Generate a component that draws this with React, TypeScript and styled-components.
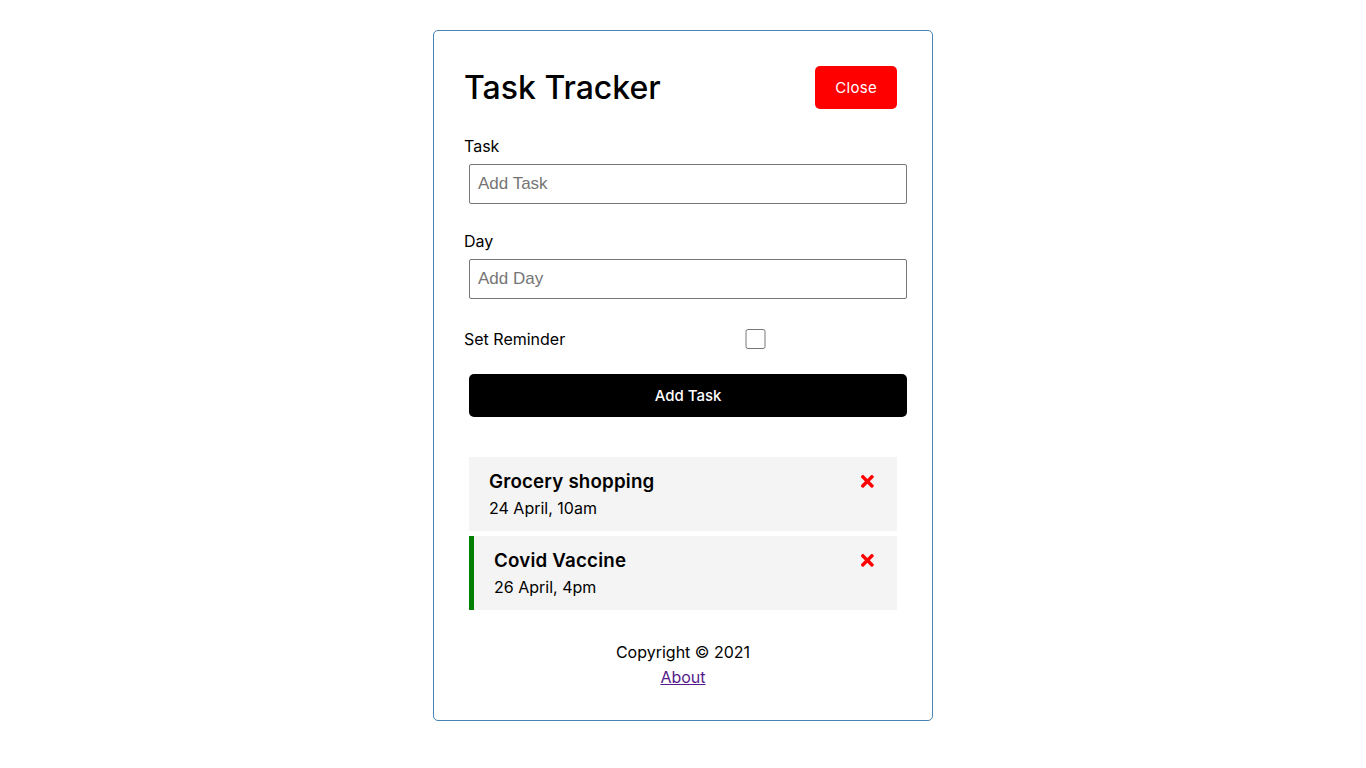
import { useState } from 'react';
import styled, { createGlobalStyle } from 'styled-components';
import { FaTimes } from 'react-icons/fa';

const GlobalStyle = createGlobalStyle`
  * {
    box-sizing: border-box;
    margin: 0;
    padding: 0;
  }
  body {
    font-family: Inter, 'Noto Sans', sans-serif;
    font-weight: 400;
    font-size: 16px;
    line-height: 25px;
    background: #fff;
    color: #000;
  }
`;

const initialTasks = [
  { id: 1, text: 'Grocery shopping', day: '24 April, 10am', reminder: false },
  { id: 2, text: 'Covid Vaccine', day: '26 April, 4pm', reminder: true },
];

const App = () => {
  const [tasks, setTasks] = useState(initialTasks);
  const [reminder, setReminder] = useState(false);

  const deleteTask = (id: number) => {
    setTasks(tasks.filter((t) => t.id !== id));
  };

  return (
    <Container>
      <GlobalStyle />
      <Header>
        <Title>Task Tracker</Title>
        <Button color="red">Close</Button>
      </Header>
      <AddForm onSubmit={(e) => e.preventDefault()}>
        <FormControl>
          <Label>Task</Label>
          <Input type="text" placeholder="Add Task" />
        </FormControl>
        <FormControl>
          <Label>Day</Label>
          <Input type="text" placeholder="Add Day" />
        </FormControl>
        <CheckControl>
          <CheckLabel>Set Reminder</CheckLabel>
          <Check
            type="checkbox"
            checked={reminder}
            onChange={(e) => setReminder(e.currentTarget.checked)}
          />
        </CheckControl>
        <BlockButton type="submit">Add Task</BlockButton>
      </AddForm>
      {tasks.map((task) => (
        <Task key={task.id} reminder={task.reminder}>
          <TaskTitle>
            {task.text}
            <FaTimes
              style={{ color: 'red', cursor: 'pointer' }}
              onClick={() => deleteTask(task.id)}
            />
          </TaskTitle>
          <TaskDay>{task.day}</TaskDay>
        </Task>
      ))}
      <Footer>
        <p>Copyright &copy; 2021</p>
        <FooterLink href="#about">About</FooterLink>
      </Footer>
    </Container>
  );
};

const Container = styled.div`
  max-width: 500px;
  margin: 30px auto;
  overflow: auto;
  min-height: 300px;
  border: 1px solid steelblue;
  padding: 30px;
  border-radius: 5px;
`;

const Header = styled.header`
  display: flex;
  justify-content: space-between;
  align-items: center;
  margin-bottom: 20px;
`;

const Title = styled.h1`
  font-size: 32px;
  font-weight: 500;
  line-height: 48px;
`;

const Button = styled.button<{ color?: string }>`
  display: inline-block;
  background: ${({ color }) => color || '#000'};
  color: #fff;
  border: none;
  padding: 10px 20px;
  margin: 5px;
  border-radius: 5px;
  cursor: pointer;
  font-size: 15px;
  font-family: inherit;
  line-height: 23px;
  letter-spacing: 0.3px;
`;

const BlockButton = styled(Button)`
  display: block;
  width: 100%;
  font-weight: 500;
  letter-spacing: 0;
`;

const AddForm = styled.form`
  margin-bottom: 40px;
`;

const FormControl = styled.div`
  margin: 20px 0;
`;

const Label = styled.label`
  display: block;
`;

const Input = styled.input`
  width: 100%;
  height: 40px;
  margin: 5px;
  padding: 3px 8px;
  font-size: 17px;
  font-family: 'Liberation Sans', Arial, sans-serif;
  border: 1px solid #767676;
  border-radius: 2px;
  &::placeholder {
    color: #757575;
  }
`;

const CheckControl = styled(FormControl)`
  display: flex;
  align-items: center;
  justify-content: space-between;
  min-height: 30px;
`;

const CheckLabel = styled.label`
  flex: 1;
`;

const Check = styled.input`
  flex: 2;
  height: 20px;
  margin-left: -2px;
`;

const Task = styled.div<{ reminder: boolean }>`
  background: #f4f4f4;
  margin: 5px;
  padding: 10px 20px;
  cursor: pointer;
  border-left: ${({ reminder }) => (reminder ? '5px solid green' : 'none')};
`;

const TaskTitle = styled.h3`
  display: flex;
  align-items: center;
  justify-content: space-between;
  font-size: 18.72px;
  font-weight: 600;
  line-height: 29px;
  letter-spacing: 0.2px;
`;

const TaskDay = styled.p`
  line-height: 25px;
`;

const Footer = styled.footer`
  margin-top: 30px;
  text-align: center;
`;

const FooterLink = styled.a`
  color: #551a8b;
`;

export default App;
